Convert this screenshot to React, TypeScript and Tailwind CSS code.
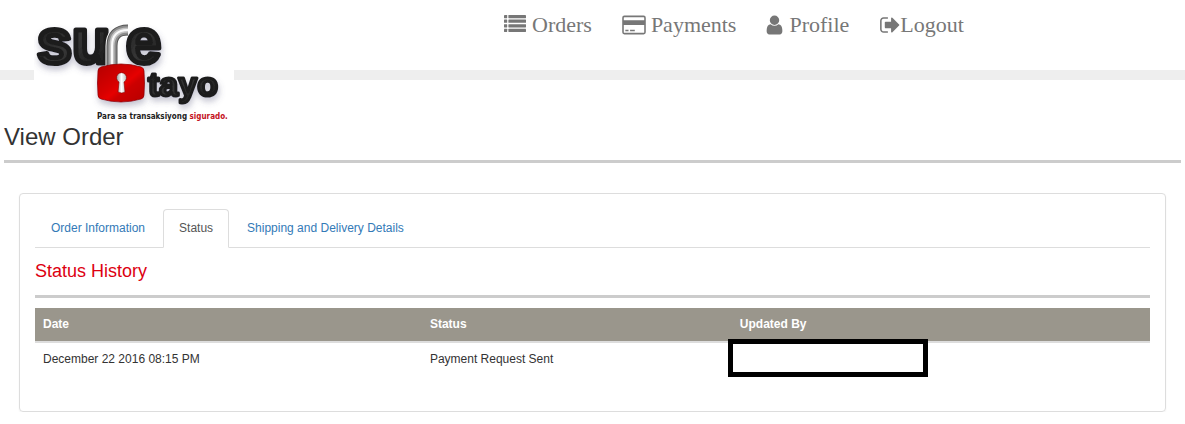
import React from 'react';

const LOGO_FONT = "'Liberation Sans', Arial, sans-serif";

// Padlock wordmark
const Logo: React.FC = () => (
  <svg width="200" height="122" viewBox="0 -12 200 122" role="img" aria-label="Sure Tayo">
    <defs>
      <linearGradient id="ink" x1="0" y1="0" x2="1" y2="1">
        <stop offset="0" stopColor="#161616" />
        <stop offset="0.5" stopColor="#363636" />
        <stop offset="1" stopColor="#141414" />
      </linearGradient>
      <linearGradient id="red" x1="0" y1="0" x2="1" y2="1">
        <stop offset="0" stopColor="#b40000" />
        <stop offset="0.45" stopColor="#d80404" />
        <stop offset="0.55" stopColor="#e60606" />
        <stop offset="0.65" stopColor="#cc0000" />
        <stop offset="1" stopColor="#b80000" />
      </linearGradient>
      <linearGradient id="hole" x1="0" y1="0" x2="1" y2="0">
        <stop offset="0" stopColor="#999" />
        <stop offset="0.5" stopColor="#fff" />
        <stop offset="1" stopColor="#bbb" />
      </linearGradient>
      <filter id="shade" x="-20%" y="-20%" width="140%" height="150%">
        <feDropShadow dx="1" dy="4" stdDeviation="3" floodColor="#55557a" floodOpacity="0.35" />
      </filter>
    </defs>
    <rect y="-12" width="200" height="122" fill="#fff" />
    <g filter="url(#shade)" fontFamily={LOGO_FONT} fontWeight="700" fill="url(#ink)" stroke="#1e1e1e" strokeLinejoin="round">
      <g fontSize="63" strokeWidth="5">
        <text x="3" y="51">su</text>
        <text x="92" y="51">e</text>
      </g>
      <text x="114" y="84" fontSize="34" strokeWidth="3">tayo</text>
    </g>
    {/* Shackle */}
    <g fill="none">
      <path d="M78 56V34Q78 18 94 18" stroke="#fff" strokeWidth="13" />
      <path d="M78 56V34Q78 18 94 18" stroke="#555" strokeWidth="11" />
      <path d="M78 56V34Q78 18 94 18" stroke="#8c8c8c" strokeWidth="9" />
      <path d="M78 56V34Q78 18 94 18" stroke="#c4c4c4" strokeWidth="5" />
      <path d="M78 56V34Q78 18 94 18" stroke="#fafafa" strokeWidth="2" />
    </g>
    {/* Lock body */}
    <g filter="url(#shade)">
      <path d="M67 55q20-6 40 0q3 1 3 4q1 12 0 24q0 3-3 4q-20 6-40 0q-3-1-3-4q-1-12 0-24q0-3 3-4z" fill="url(#red)" stroke="#920000" strokeWidth="0.8" />
    </g>
    <path d="M84 80l1-10a5 5 0 1 1 5 0l1 10q-3 2-7 0z" fill="url(#hole)" stroke="#800" strokeWidth="0.6" />
    <text x="63" y="107" fontFamily="'DejaVu Sans Condensed', 'DejaVu Sans', sans-serif" fontWeight="700" fontSize="8" fill="#222">
      Para sa transaksiyong <tspan fill="#c4101c">sigurado.</tspan>
    </text>
  </svg>
);

const ListIcon: React.FC = () => (
  <svg className="h-[23px] w-[22px]" viewBox="0 0 22 23" fill="currentColor" aria-hidden="true">
    {[2, 6.6, 11.2, 15.8].map((y) => (
      <g key={y}>
        <rect x="0" y={y} width="3.2" height="3.2" rx="0.4" />
        <rect x="4.4" y={y} width="17.6" height="3.2" rx="0.4" />
      </g>
    ))}
  </svg>
);

const CardIcon: React.FC = () => (
  <svg className="h-[22px] w-6" viewBox="0 0 1920 1792" fill="currentColor" aria-hidden="true">
    <rect x="64" y="192" width="1792" height="1408" rx="110" fill="none" stroke="currentColor" strokeWidth="128" />
    <path d="M64 512h1792v384H64zM256 1280h256v128H256zM640 1280h384v128H640z" />
  </svg>
);

const UserIcon: React.FC = () => (
  <svg className="h-[22px] w-[17px]" viewBox="256 0 1280 1792" fill="currentColor" aria-hidden="true">
    <path d="M1536 1399q0 109-62.5 187t-150.5 78h-854q-88 0-150.5-78t-62.5-187q0-85 8.5-160.5t31.5-152 58.5-131 94-89 134.5-34.5q131 128 313 128t313-128q76 0 134.5 34.5t94 89 58.5 131 31.5 152 8.5 160.5zm-256-887q0 159-112.5 271.5t-271.5 112.5-271.5-112.5-112.5-271.5 112.5-271.5 271.5-112.5 271.5 112.5 112.5 271.5z" />
  </svg>
);

const LogoutIcon: React.FC = () => (
  <svg className="h-[22px] w-[21px]" viewBox="0 0 1664 1792" fill="currentColor" aria-hidden="true">
    <path d="M704 1440q0 4 1 20t.5 26.5-3 23.5-10 19.5-20.5 6.5h-320q-119 0-203.5-84.5t-84.5-203.5v-704q0-119 84.5-203.5t203.5-84.5h320q13 0 22.5 9.5t9.5 22.5q0 4 1 20t.5 26.5-3 23.5-10 19.5-20.5 6.5h-320q-66 0-113 47t-47 113v704q0 66 47 113t113 47h312l11.5 1 11.5 3 8 5.5 7 9 2 13.5zm928-544q0 26-19 45l-544 544q-19 19-45 19t-45-19-19-45v-288h-448q-26 0-45-19t-19-45v-384q0-26 19-45t45-19h448v-288q0-26 19-45t45-19 45 19l544 544q19 19 19 45z" />
  </svg>
);

const navItems = [
  { label: 'Orders', icon: <ListIcon />, gap: 'gap-1.5' },
  { label: 'Payments', icon: <CardIcon />, gap: 'gap-[5px]' },
  { label: 'Profile', icon: <UserIcon />, gap: 'gap-1.5' },
  { label: 'Logout', icon: <LogoutIcon />, gap: 'gap-0' },
];

const tabs = ['Order Information', 'Status', 'Shipping and Delivery Details'];

const App: React.FC = () => {
  return (
    <div className="bg-white font-['Liberation_Sans',Arial,sans-serif] text-xs text-[#333]">
      {/* Header */}
      <header className="relative h-20 border-b-10 border-[#eee]">
        <a href="#" className="absolute left-[34px] top-0 block">
          <Logo />
        </a>
        <nav className="flex gap-[30px] pl-[504px] pt-3 font-['Liberation_Serif','Times_New_Roman',serif] text-[22px] leading-[25px] text-[#777]">
          {navItems.map(({ label, icon, gap }) => (
            <a key={label} href="#" className={`flex items-center ${gap}`}>
              {icon}
              <span>{label}</span>
            </a>
          ))}
        </nav>
      </header>

      <main className="px-1 pt-11">
        <h1 className="border-b-3 border-[#ccc] pb-2.5 text-2xl leading-[26px]">View Order</h1>

        <section className="mx-[15px] mt-[30px] rounded border border-[#ddd] px-[15px] pb-[35px] pt-[15px] shadow-xs">
          {/* Tabs */}
          <div role="tablist" className="flex gap-0.5 border-b border-[#ddd]">
            {tabs.map((tab) => (
              <button
                key={tab}
                type="button"
                role="tab"
                aria-selected={tab === 'Status'}
                className={`-mb-px rounded-t border px-[15px] py-2.5 leading-[17px] ${
                  tab === 'Status'
                    ? 'border-[#ddd] border-b-white bg-white text-[#555]'
                    : 'border-transparent text-[#337ab7]'
                }`}
              >
                {tab}
              </button>
            ))}
          </div>

          <h2 className="mb-2.5 border-b-3 border-[#ccc] pb-[13px] pt-[13px] text-lg leading-[21px] text-[#dd0011]">Status History</h2>

          <table className="w-full table-fixed text-left leading-[17px]">
            <thead className="border-b-2 border-[#ddd] bg-[#9a968c] text-white">
              <tr>
                <th className="w-[34.7%] p-2">Date</th>
                <th className="w-[27.8%] p-2">Status</th>
                <th className="p-2">Updated By</th>
              </tr>
            </thead>
            <tbody>
              <tr>
                <td className="p-2">December 22 2016 08:15 PM</td>
                <td className="p-2">Payment Request Sent</td>
                <td className="relative p-2">
                  {/* Redacted name */}
                  <div className="absolute -left-1 -top-1 h-[38px] w-[200px] border-5 border-black bg-white"></div>
                </td>
              </tr>
            </tbody>
          </table>
        </section>
      </main>
    </div>
  );
};

export default App;
